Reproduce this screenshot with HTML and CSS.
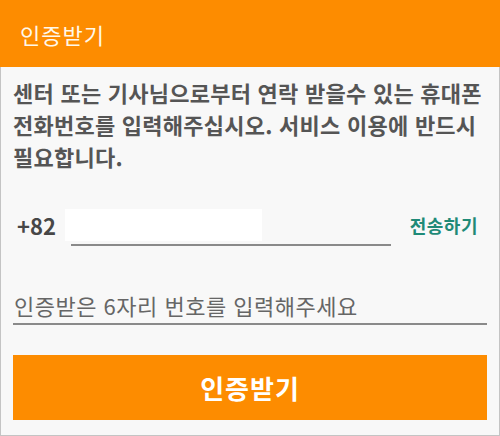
FILE: index.html
```html
<!DOCTYPE html>
<html lang="ko">
<head>
  <meta charset="UTF-8" />
  <meta name="viewport" content="width=device-width, initial-scale=1" />
  <title>인증받기</title>
  <link rel="stylesheet" href="styles.css">
</head>
<body>

<div class="screen">
  <div class="appbar">인증받기</div>

  <div class="content">
    <p class="desc">센터 또는 기사님으로부터 연락 받을수 있는 휴대폰<br>전화번호를 입력해주십시오. 서비스 이용에 반드시<br>필요합니다.</p>

    <div class="phone-row">
      <span class="prefix">+82</span>
      <div class="phone-field">
        <span class="autofill"></span>
      </div>
      <span class="send">전송하기</span>
    </div>

    <div class="code-field">인증받은 6자리 번호를 입력해주세요</div>

    <button class="submit">인증받기</button>
  </div>
</div>

</body>
</html>
```

FILE: styles.css
```css
* {
  box-sizing: border-box;
}

body {
  margin: 0;
  font-family: "Noto Sans CJK KR", "Noto Sans", sans-serif;
}

.screen {
  width: 500px;
  height: 436px;
  background: #f8f8f8;
  border: 1px solid #c4c4c4;
  border-top: none;
  display: flex;
  flex-direction: column;
}

.appbar {
  height: 67px;
  margin: 0 -1px;
  background: #fd8c00;
  color: #fff8ea;
  font-size: 22px;
  letter-spacing: 1px;
  display: flex;
  align-items: center;
  padding-left: 20px;
}

.content {
  padding: 9px 12px 0 12px;
}

.desc {
  margin: 0;
  font-size: 22px;
  font-weight: bold;
  letter-spacing: 0.25px;
  line-height: 32px;
  color: #555;
  white-space: nowrap;
}

.phone-row {
  display: flex;
  align-items: center;
  margin-top: 28px;
  height: 50px;
}

.prefix {
  font-size: 22px;
  font-weight: bold;
  color: #474747;
  padding-left: 4px;
  width: 58px;
}

.phone-field {
  width: 320px;
  height: 41px;
  border-bottom: 2px solid #8a8a8a;
  position: relative;
}

.autofill {
  position: absolute;
  left: -6px;
  top: 4px;
  width: 197px;
  height: 32px;
  background: #fff;
}

.send {
  margin-left: auto;
  margin-right: 9px;
  font-size: 18px;
  font-weight: bold;
  letter-spacing: 0.5px;
  color: #1f8a77;
}

.code-field {
  margin-top: 39px;
  padding: 0 0 2px 1px;
  font-size: 22px;
  letter-spacing: 0.5px;
  color: #666;
  border-bottom: 2px solid #8a8a8a;
}

.submit {
  display: block;
  width: 100%;
  height: 65px;
  margin-top: 30px;
  border: none;
  background: #fd8c00;
  color: #fff;
  font-family: inherit;
  font-size: 26px;
  font-weight: bold;
  letter-spacing: 1px;
  padding-bottom: 2px;
}
```
